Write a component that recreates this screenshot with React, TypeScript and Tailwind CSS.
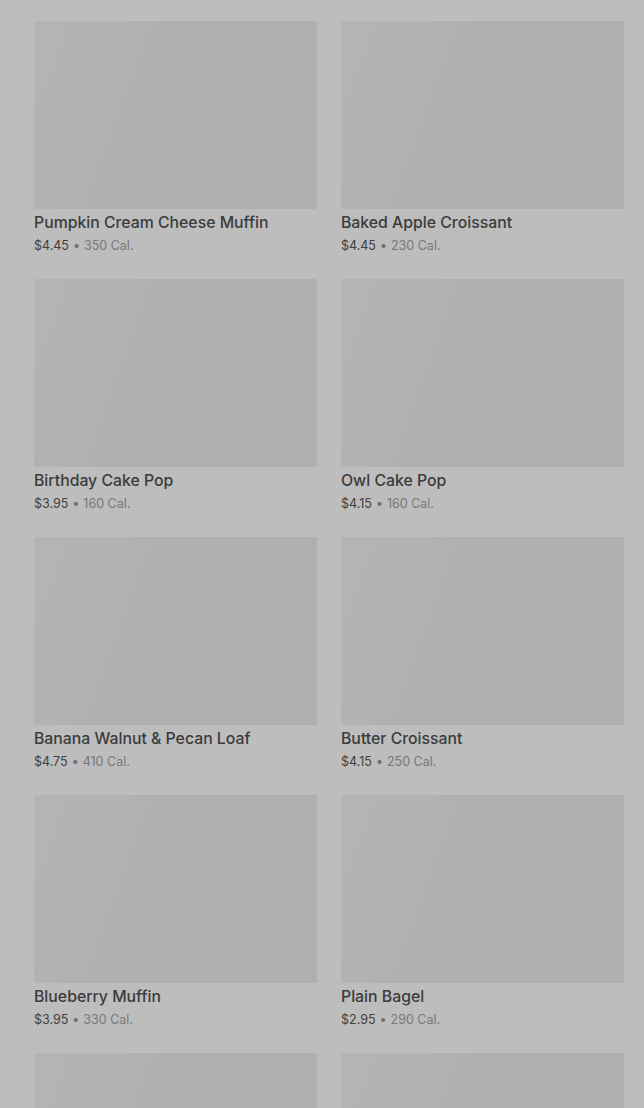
import React from "react";

const items = [
  { name: "Pumpkin Cream Cheese Muffin", price: "$4.45", cal: "350 Cal." },
  { name: "Baked Apple Croissant", price: "$4.45", cal: "230 Cal." },
  { name: "Birthday Cake Pop", price: "$3.95", cal: "160 Cal." },
  { name: "Owl Cake Pop", price: "$4.15", cal: "160 Cal." },
  { name: "Banana Walnut & Pecan Loaf", price: "$4.75", cal: "410 Cal." },
  { name: "Butter Croissant", price: "$4.15", cal: "250 Cal." },
  { name: "Blueberry Muffin", price: "$3.95", cal: "330 Cal." },
  { name: "Plain Bagel", price: "$2.95", cal: "290 Cal." },
  { name: "", price: "", cal: "" },
  { name: "", price: "", cal: "" },
];

export default function App() {
  return (
    <div className="h-[1108px] w-[644px] overflow-hidden bg-[#bdbdbd] pl-[34px] pr-[20px] pt-[21px] font-['Inter',sans-serif]">
      <div className="grid grid-cols-2 gap-x-[24px] gap-y-[25px]">
        {items.map((it, i) => (
          <div key={i} className="flex flex-col">
            <div className="h-[188px] rounded-[2px] bg-[linear-gradient(110deg,#b4b4b4_0%,#b2b2b2_25%,#afafaf_45%,#afafaf_100%)]" />
            {it.name && (
              <>
                <div className="mt-[4px] text-[15.8px] leading-[20px] font-medium text-[#3b3b3b]">
                  {it.name}
                </div>
                <div className="mt-[4px] text-[12.5px] leading-[17px] text-[#404040]">
                  {it.price}
                  <span className="mx-[4px] text-[#6f6f6f]">•</span>
                  <span className="text-[#787878]">{it.cal}</span>
                </div>
              </>
            )}
          </div>
        ))}
      </div>
    </div>
  );
}
